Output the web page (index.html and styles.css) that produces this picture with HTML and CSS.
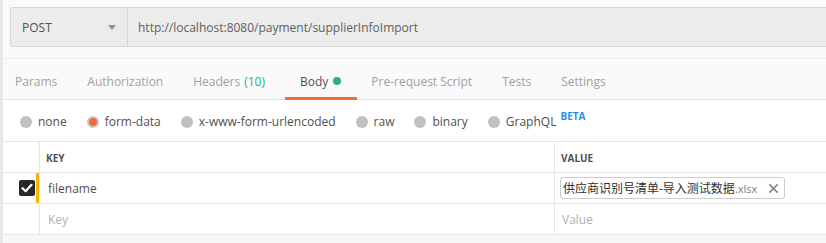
FILE: index.html
```html
<!DOCTYPE html>
<html lang="zh">
<head>
    <meta charset="UTF-8">
    <title>POST supplierInfoImport</title>
    <link rel="stylesheet" href="styles.css">
</head>
<body>
    <div class="app">
        <div class="request-bar">
            <div class="method">
                <span>POST</span>
                <span class="caret"></span>
            </div>
            <div class="url">http://localhost:8080/payment/supplierInfoImport</div>
        </div>

        <div class="tabs">
            <div class="tab">Params</div>
            <div class="tab">Authorization</div>
            <div class="tab">Headers <span class="count">(10)</span></div>
            <div class="tab active">Body <span class="dot"></span></div>
            <div class="tab">Pre-request Script</div>
            <div class="tab">Tests</div>
            <div class="tab">Settings</div>
        </div>

        <div class="body-panel">
            <div class="radios">
                <label class="radio"><span class="circle"></span>none</label>
                <label class="radio checked"><span class="circle"></span>form-data</label>
                <label class="radio"><span class="circle"></span>x-www-form-urlencoded</label>
                <label class="radio"><span class="circle"></span>raw</label>
                <label class="radio"><span class="circle"></span>binary</label>
                <label class="radio"><span class="circle"></span>GraphQL<sup class="beta">BETA</sup></label>
            </div>

            <div class="table">
                <div class="row head">
                    <div class="cell check"></div>
                    <div class="cell key">KEY</div>
                    <div class="cell value">VALUE</div>
                </div>
                <div class="row">
                    <div class="cell check">
                        <span class="checkbox">
                            <svg width="12" height="10" viewBox="0 0 12 10"><path d="M1.5 5.2 L4.6 8.2 L10.5 1.8" fill="none" stroke="#fff" stroke-width="2.2" stroke-linecap="round" stroke-linejoin="round"/></svg>
                        </span>
                        <span class="mark"></span>
                    </div>
                    <div class="cell key">filename</div>
                    <div class="cell value">
                        <span class="file">供应商识别号清单-导入测试数据<span class="ext">.xlsx</span>
                            <svg class="remove" width="11" height="11" viewBox="0 0 12 12"><path d="M1.5 1.5 L10.5 10.5 M10.5 1.5 L1.5 10.5" stroke="#808080" stroke-width="1.6"/></svg>
                        </span>
                    </div>
                </div>
                <div class="row">
                    <div class="cell check"></div>
                    <div class="cell key placeholder">Key</div>
                    <div class="cell value placeholder">Value</div>
                </div>
            </div>
            <div class="footer"></div>
        </div>
    </div>
</body>
</html>
```

FILE: styles.css
```css
body {
    margin: 0;
    background: #fafafa;
    font-family: 'Open Sans', 'Noto Sans CJK SC', sans-serif;
    color: #505050;
    overflow: hidden;
}
.app {
    height: 243px;
    border-left: 3px solid #e8e8e8;
    display: flex;
    flex-direction: column;
}
.request-bar {
    display: flex;
    height: 38px;
    margin: 7px 0 0 7px;
    background: #ececec;
    border: 1px solid #d6d6d6;
    border-right: none;
    border-radius: 3px 0 0 3px;
}
.method {
    width: 94px;
    padding: 0 11px 0 11px;
    display: flex;
    align-items: center;
    justify-content: space-between;
    border-right: 1px solid #d6d6d6;
    font-size: 12px;
    color: #505050;
}
.caret {
    width: 0;
    height: 0;
    border-left: 4px solid transparent;
    border-right: 4px solid transparent;
    border-top: 5px solid #909090;
}
.url {
    display: flex;
    align-items: center;
    padding-left: 10px;
    font-size: 12px;
    color: #606060;
}
.tabs {
    display: flex;
    margin-top: 11px;
    height: 40px;
    border-top: 1px solid #eeeeee;
    border-bottom: 1px solid #e4e4e4;
}
.tab {
    display: flex;
    align-items: center;
    padding: 6px 15px 0;
    font-size: 12px;
    color: #a0a0a0;
    border-bottom: 3px solid transparent;
    box-sizing: border-box;
    height: 41px;
}
.tab:first-child { padding-left: 12px; }
.tab .count {
    color: #26b47f;
    margin-left: 4px;
}
.tab.active {
    color: #505050;
    border-bottom-color: #f26b3a;
    padding-right: 16px;
    margin-left: 5px;
    margin-right: -1px;
}
.dot {
    width: 8px;
    height: 8px;
    border-radius: 50%;
    background: #26b47f;
    margin-left: 5px;
}
.body-panel {
    flex: 1;
    background: #ffffff;
    display: flex;
    flex-direction: column;
}
.radios {
    display: flex;
    align-items: center;
    height: 41px;
    padding: 2px 0 0 17px;
    box-sizing: border-box;
}
.radio {
    display: flex;
    align-items: center;
    font-size: 12px;
    color: #505050;
    margin-right: 20px;
}
.circle {
    width: 12px;
    height: 12px;
    border-radius: 50%;
    background: #c0c0c0;
    margin-right: 6px;
    box-sizing: border-box;
}
.radio.checked .circle {
    background: #f26b3a;
    border: 2.5px solid #c8c8c8;
}
.beta {
    color: #1d8ef2;
    font-size: 10px;
    font-weight: bold;
    margin-left: 4px;
    align-self: flex-start;
    margin-top: -4px;
}
.table {
    border-top: 1px solid #e6e6e6;
}
.row {
    display: flex;
    height: 30px;
    border-bottom: 1px solid #e6e6e6;
}
.cell {
    display: flex;
    align-items: center;
    box-sizing: border-box;
}
.check {
    width: 37px;
    flex-shrink: 0;
    justify-content: flex-end;
    border-right: 1px solid #e6e6e6;
}
.key {
    width: 515px;
    padding-left: 8px;
    border-right: 1px solid #e6e6e6;
    font-size: 12px;
    color: #505050;
}
.value {
    flex: 1;
    padding-left: 7px;
    font-size: 12px;
}
.head .key, .head .value {
    font-size: 10px;
    font-weight: bold;
    color: #505050;
    padding: 2px 0 0 6px;
}
.checkbox {
    width: 16px;
    height: 16px;
    border-radius: 2px;
    background: #282828;
    display: flex;
    align-items: center;
    justify-content: center;
    margin-right: 1px;
}
.mark {
    width: 3px;
    align-self: stretch;
    background: #f5b400;
}
.file {
    display: flex;
    align-items: center;
    height: 20px;
    margin-left: -2px;
    border: 1px solid #cccccc;
    border-radius: 3px;
    padding: 0 5px 0 2px;
    font-size: 12px;
    color: #303030;
    background: #fff;
}
.ext {
    font-size: 11px;
    color: #808080;
}
.remove {
    margin-left: 11px;
}
.placeholder {
    color: #b0b0b0;
}
.footer {
    flex: 1;
    background: #f7f7f7;
}
```
